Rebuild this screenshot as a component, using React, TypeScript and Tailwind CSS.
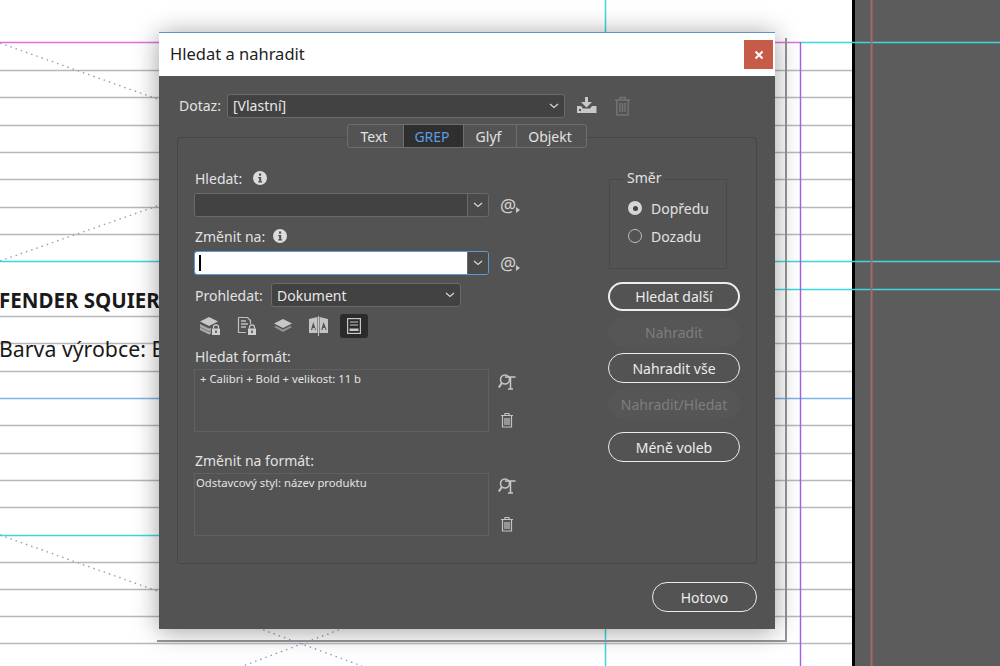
import { ReactNode } from "react";

const guideRows = [70, 97, 125, 152, 179, 207, 234, 316, 343, 371, 425, 453, 480, 507, 562, 589, 616, 643];

function Chevron() {
  return (
    <svg width="10" height="6" viewBox="0 0 10 6" fill="none" stroke="#d8d8d8" strokeWidth="1.2">
      <path d="M1 1l4 3.5L9 1" />
    </svg>
  );
}

function InfoIcon() {
  return (
    <svg width="14" height="14" viewBox="0 0 14 14">
      <circle cx="7" cy="7" r="7" fill="#dcdcdc" />
      <rect x="6" y="2.5" width="2.2" height="2.2" fill="#535353" />
      <path d="M5.2 6h3v4.2h1v1.2H5.2v-1.2h1V7.2h-1z" fill="#535353" />
    </svg>
  );
}

function TrashIcon() {
  return (
    <svg width="14" height="16" viewBox="0 0 14 16" fill="none" stroke="#c4c4c4" strokeWidth="1.2">
      <path d="M1 3.5h12M5 3.5V1.5h4v2M2.5 3.5v11.500h9V3.500M5 6v7M7 6v7M9 6v7" />
    </svg>
  );
}

function BigTrashIcon() {
  return (
    <svg width="17" height="20" viewBox="0 0 17 20" fill="none" stroke="#747474" strokeWidth="1.4">
      <path d="M1 4h15M6 4V1.500h5V4M2.800 4v15h11.400V4M6 7v9M8.500 7v9M11 7v9" />
    </svg>
  );
}

function SaveIcon() {
  return (
    <svg width="20" height="17" viewBox="0 0 20 17">
      <path d="M8 0h3v5h4l-5.5 5.5L4 5h4z" fill="#c8c8c8" />
      <path d="M0 9h4l2 2.5h7L15 9h4.500v7H0z" fill="#c8c8c8" />
      <rect x="2" y="12" width="2" height="2" fill="#535353" />
    </svg>
  );
}

function FindFormatIcon() {
  return (
    <svg width="18" height="16" viewBox="0 0 18 16" fill="none" stroke="#c8c8c8">
      <circle cx="7" cy="5.500" r="4.500" strokeWidth="1.500" />
      <path d="M3.800 9L0.800 13.500" strokeWidth="2" />
      <path d="M7 3h10.500M12.500 3V15M10 15h5" strokeWidth="1.500" />
    </svg>
  );
}

function AtPicker() {
  return (
    <div className="flex items-end text-[18px] leading-none text-[#d0d0d0]">
      @
      <svg width="4" height="6" viewBox="0 0 4 6" className="mb-[1px]">
        <path d="M0 0l4 3-4 3z" fill="#c8c8c8" />
      </svg>
    </div>
  );
}

function Lock({ x, y }: { x: number; y: number }) {
  return (
    <g transform={`translate(${x} ${y})`}>
      <path d="M2 4V2.800a2.500 2.500 0 015 0V4" fill="none" stroke="#d0d0d0" strokeWidth="1.200" />
      <rect x="0.500" y="4" width="8" height="6.500" fill="#d0d0d0" />
      <rect x="3.700" y="6" width="1.600" height="2.500" fill="#535353" />
    </g>
  );
}

function ScopeIcons() {
  return (
    <div className="mt-[7px] flex h-[24px] items-center">
      <div className="flex w-[31px] justify-center">
        <svg width="22" height="20" viewBox="0 0 22 20">
          <path d="M10 1l9 4.500-9 4.500-9-4.500z" fill="#c8c8c8" />
          <path d="M1 8l9 4.500 2-1v3L10 15.500 1 11zM1 11.500l9 4.500 2-1v2.500L10 18.500 1 14z" fill="#a8a8a8" />
          <Lock x={12.500} y={8.500} />
        </svg>
      </div>
      <div className="ml-[5px] flex w-[33px] justify-center">
        <svg width="20" height="20" viewBox="0 0 20 20" fill="none">
          <path d="M1.500 1.500h9l3 3V8M1.500 1.500V16.500H9" stroke="#c0c0c0" strokeWidth="1.200" />
          <path d="M4 5h5M4 8h7M4 11h5" stroke="#c0c0c0" strokeWidth="1.400" />
          <Lock x={10.500} y={8.500} />
        </svg>
      </div>
      <div className="flex w-[39px] justify-center">
        <svg width="20" height="16" viewBox="0 0 20 16">
          <path d="M10 1l9 4.500-9 4.500-9-4.500z" fill="#c8c8c8" />
          <path d="M1 9l2-1 7 3.500L17 8l2 1-9 5z" fill="#949494" />
        </svg>
      </div>
      <div className="flex w-[33px] justify-center">
        <svg width="21" height="20" viewBox="0 0 21 20">
          <path d="M1 3l8.500-2v16L1 17zM20 3l-8.500-2v16l8.500 0z" fill="#c4c4c4" />
          <rect x="10" y="0" width="1" height="20" fill="#c4c4c4" />
          <path d="M5.200 6L3 14h1.200l.5-2h2l.5 2H8zM15.500 6l-2.200 8h1.200l.5-2h2l.5 2h1.200z" fill="#535353" />
        </svg>
      </div>
      <div className="ml-[5px] flex h-[24px] w-[28px] items-center justify-center rounded-[3px] bg-[#2b2b2b]">
        <svg width="14" height="16" viewBox="0 0 14 16" fill="none">
          <rect x="0.600" y="0.600" width="12.800" height="14.800" stroke="#c8c8c8" strokeWidth="1.200" />
          <path d="M3 4h8M3 7h8" stroke="#c8c8c8" strokeWidth="1.200" />
          <rect x="2.500" y="10.500" width="9" height="2.500" fill="#c8c8c8" />
        </svg>
      </div>
    </div>
  );
}

function Combo({ focused }: { focused?: boolean }) {
  return (
    <div className="flex items-center">
      <div
        className={
          "flex h-[24px] w-[295px] overflow-hidden rounded-[3px] border " +
          (focused ? "border-[#5a9bdc]" : "border-[#6a6a6a]")
        }
      >
        <div className={"flex flex-1 items-center pl-[4px] " + (focused ? "bg-white" : "bg-[#424242]")}>
          {focused && <div className="h-[16px] w-[2px] bg-black" />}
        </div>
        <div className="flex w-[21px] items-center justify-center border-l border-[#6a6a6a] bg-[#4a4a4a]">
          <Chevron />
        </div>
      </div>
      <div className="ml-[11px]">
        <AtPicker />
      </div>
    </div>
  );
}

function FormatBox({ text, indent }: { text: string; indent?: boolean }) {
  return (
    <div className="flex">
      <div
        className={
          "h-[63px] w-[295px] border border-[#616161] pt-[1px] text-[11.3px] leading-[15px] text-[#e4e4e4] " +
          (indent ? "pl-[5px]" : "pl-[1px]")
        }
      >
        {text}
      </div>
      <div className="ml-[9px] flex flex-col items-center pt-[5px]">
        <FindFormatIcon />
        <div className="mt-[22px]">
          <TrashIcon />
        </div>
      </div>
    </div>
  );
}

function PillButton({ children, primary, disabled }: { children: ReactNode; primary?: boolean; disabled?: boolean }) {
  if (disabled) {
    return (
      <div className="flex h-[30px] w-[132px] items-center justify-center rounded-full bg-[#565656] text-[14px] text-[#7e7e7e]">
        {children}
      </div>
    );
  }
  return (
    <div
      className={
        "flex w-[132px] items-center justify-center rounded-full border-[#ececec] text-[14px] text-[#ececec] " +
        (primary ? "h-[29px] border-[2.500px]" : "h-[30px] border")
      }
    >
      {children}
    </div>
  );
}

function Radio({ label, on }: { label: string; on?: boolean }) {
  return (
    <div className="flex h-[28px] items-center">
      {on ? (
        <div className="flex h-[14px] w-[14px] items-center justify-center rounded-full bg-[#d6d6d6]">
          <div className="h-[5px] w-[5px] rounded-full bg-[#444444]" />
        </div>
      ) : (
        <div className="h-[14px] w-[14px] rounded-full border border-[#bdbdbd]" />
      )}
      <span className="ml-[9px] text-[14px] text-[#e2e2e2]">{label}</span>
    </div>
  );
}

function Tab({ label, w, active }: { label: string; w: string; active?: boolean }) {
  return (
    <div
      className={
        "flex h-full items-center justify-center border-r border-[#6e6e6e] pr-[3px] text-[14px] last:border-r-0 " +
        w +
        (active ? " bg-[#2f2f2f] text-[#5b9de0]" : " text-[#e2e2e2]")
      }
    >
      {label}
    </div>
  );
}

export default function App() {
  return (
    <div
      className="relative flex h-[666px] w-[1000px] overflow-hidden bg-white"
      style={{ fontFamily: '"Noto Sans", "Open Sans", sans-serif' }}
    >
      {/* dokument */}
      <div className="h-full w-[855px] border-r-[3px] border-black bg-white" />
      <div className="h-full flex-1 bg-[#5c5c5c]" />

      <svg className="absolute inset-0" width="1000" height="666" viewBox="0 0 1000 666" fill="none">
        {guideRows.map((y) => (
          <line key={y} x1="0" x2="852" y1={y + 0.5} y2={y + 0.5} stroke="#b8b8b8" strokeWidth="1.400" />
        ))}
        <line x1="0" x2="852" y1="398.500" y2="398.500" stroke="#7fb4e6" strokeWidth="1.400" />
        <line x1="0" x2="1000" y1="261.500" y2="261.500" stroke="#3fd6dc" strokeWidth="1.500" />
        <line x1="775" x2="1000" y1="289.500" y2="289.500" stroke="#3fd6dc" strokeWidth="1.500" />
        <line x1="0" x2="159" y1="535.500" y2="535.500" stroke="#3fd6dc" strokeWidth="1.500" />
        <line x1="0" x2="800" y1="42.500" y2="42.500" stroke="#e06ee0" strokeWidth="1.400" />
        <line x1="800" x2="1000" y1="42.500" y2="42.500" stroke="#3fd6dc" strokeWidth="1.500" />
        <line x1="605.500" x2="605.500" y1="0" y2="666" stroke="#3fd6dc" strokeWidth="1.500" />
        <line x1="800.500" x2="800.500" y1="42" y2="666" stroke="#a05fe8" strokeWidth="1.400" />
        <line x1="871.500" x2="871.500" y1="0" y2="666" stroke="#a06a68" strokeWidth="2" />
        <line x1="786" x2="786" y1="38" y2="642" stroke="#969696" strokeWidth="2" />
        <line x1="157" x2="787" y1="641" y2="641" stroke="#969696" strokeWidth="2" />
        <g stroke="#8ba0c4" strokeDasharray="1.500 4" strokeWidth="1.400">
          <line x1="0" y1="43" x2="160" y2="100" />
          <line x1="0" y1="261" x2="160" y2="205" />
          <line x1="0" y1="535" x2="160" y2="592" />
          <line x1="258" y1="628" x2="362" y2="666" />
          <line x1="344" y1="628" x2="243" y2="666" />
        </g>
      </svg>

      <div className="absolute left-[-1px] top-[288px] text-[20.500px] font-bold leading-[24px] text-[#1a1a1a]">FENDER SQUIER</div>
      <div className="absolute left-[-1px] top-[336px] whitespace-nowrap text-[21.300px] leading-[26px] text-[#1a1a1a]">Barva výrobce: B</div>

      {/* okno */}
      <div className="absolute left-[159px] top-[32px] flex h-[597px] w-[616px] flex-col border-t border-[#5d93c7] shadow-[0_2px_24px_rgba(0,0,0,0.38)]">
        <div className="flex h-[43px] shrink-0 items-center justify-between bg-white pl-[11px] pr-[2px]">
          <span className="text-[16.500px] text-[#222222]">Hledat a nahradit</span>
          <div className="flex h-[29px] w-[29px] items-center justify-center bg-[#c65c47]">
            <svg width="10" height="10" viewBox="0 0 10 10" stroke="#ffffff" strokeWidth="2">
              <path d="M1.500 1.500l7 7M8.500 1.500l-7 7" />
            </svg>
          </div>
        </div>

        <div className="flex flex-1 flex-col bg-[#535353] px-[18px]">
          <div className="mt-[18px] flex h-[23px] items-center pl-[2px]">
            <span className="w-[48px] text-[14px] text-[#e2e2e2]">Dotaz:</span>
            <div className="flex h-[24px] w-[338px] items-center justify-between rounded-[3px] border border-[#6a6a6a] bg-[#424242] pl-[5px] pr-[5px]">
              <span className="text-[14px] text-[#e8e8e8]">[Vlastní]</span>
              <Chevron />
            </div>
            <div className="ml-[12px]">
              <SaveIcon />
            </div>
            <div className="ml-[17px]">
              <BigTrashIcon />
            </div>
          </div>

          <div className="relative mt-[20px] h-[427px] w-[580px] rounded-[3px] border border-[#464646] pl-[16px] pt-[30px]">
            <div className="absolute left-[169px] top-[-14px] flex h-[24px] w-[240px] overflow-hidden rounded-[3px] border border-[#6e6e6e] bg-[#535353]">
              <Tab label="Text" w="w-[56px]" />
              <Tab label="GREP" w="w-[60px]" active />
              <Tab label="Glyf" w="w-[53px]" />
              <Tab label="Objekt" w="flex-1" />
            </div>

            <div className="flex">
              <div className="w-[414px]">
                <div className="flex h-[20px] items-center pl-[1px] text-[14px] text-[#e2e2e2]">
                  Hledat:
                  <span className="ml-[11px]">
                    <InfoIcon />
                  </span>
                </div>
                <div className="mt-[5px]">
                  <Combo />
                </div>
                <div className="mt-[9px] flex h-[20px] items-center pl-[1px] text-[14px] text-[#e2e2e2]">
                  Změnit na:
                  <span className="ml-[8px]">
                    <InfoIcon />
                  </span>
                </div>
                <div className="mt-[5px]">
                  <Combo focused />
                </div>
                <div className="mt-[8px] flex h-[24px] items-center pl-[1px]">
                  <span className="w-[76px] text-[14px] text-[#e2e2e2]">Prohledat:</span>
                  <div className="flex h-[24px] w-[190px] items-center justify-between rounded-[3px] border border-[#6a6a6a] bg-[#424242] pl-[5px] pr-[5px]">
                    <span className="text-[14px] text-[#e8e8e8]">Dokument</span>
                    <Chevron />
                  </div>
                </div>
                <ScopeIcons />
                <div className="mt-[8px] flex h-[20px] items-center pl-[1px] text-[14px] text-[#e2e2e2]">Hledat formát:</div>
                <div className="mt-[3px]">
                  <FormatBox text="+ Calibri + Bold + velikost: 11 b" indent />
                </div>
                <div className="mt-[18px] flex h-[20px] items-center pl-[1px] text-[14px] text-[#e2e2e2]">Změnit na formát:</div>
                <div className="mt-[3px]">
                  <FormatBox text="Odstavcový styl: název produktu" />
                </div>
              </div>

              <div className="mt-[11px] flex flex-col">
                <div className="relative ml-[1px] h-[90px] w-[118px] rounded-[2px] border border-[#484848] pl-[18px] pt-[14px]">
                  <span className="absolute left-[14px] top-[-12px] bg-[#535353] px-[3px] text-[14px] leading-[20px] text-[#e2e2e2]">Směr</span>
                  <Radio label="Dopředu" on />
                  <Radio label="Dozadu" />
                </div>
                <div className="mt-[13px] flex flex-col gap-[6px]">
                  <PillButton primary>Hledat další</PillButton>
                  <PillButton disabled>Nahradit</PillButton>
                  <PillButton>Nahradit vše</PillButton>
                  <PillButton disabled>Nahradit/Hledat</PillButton>
                  <div className="mt-[7px]">
                    <PillButton>Méně voleb</PillButton>
                  </div>
                </div>
              </div>
            </div>
          </div>

          <div className="mt-[18px] flex justify-end">
            <div className="flex h-[30px] w-[105px] items-center justify-center rounded-full border border-[#ececec] text-[14px] text-[#ececec]">
              Hotovo
            </div>
          </div>
        </div>
      </div>
    </div>
  );
}
